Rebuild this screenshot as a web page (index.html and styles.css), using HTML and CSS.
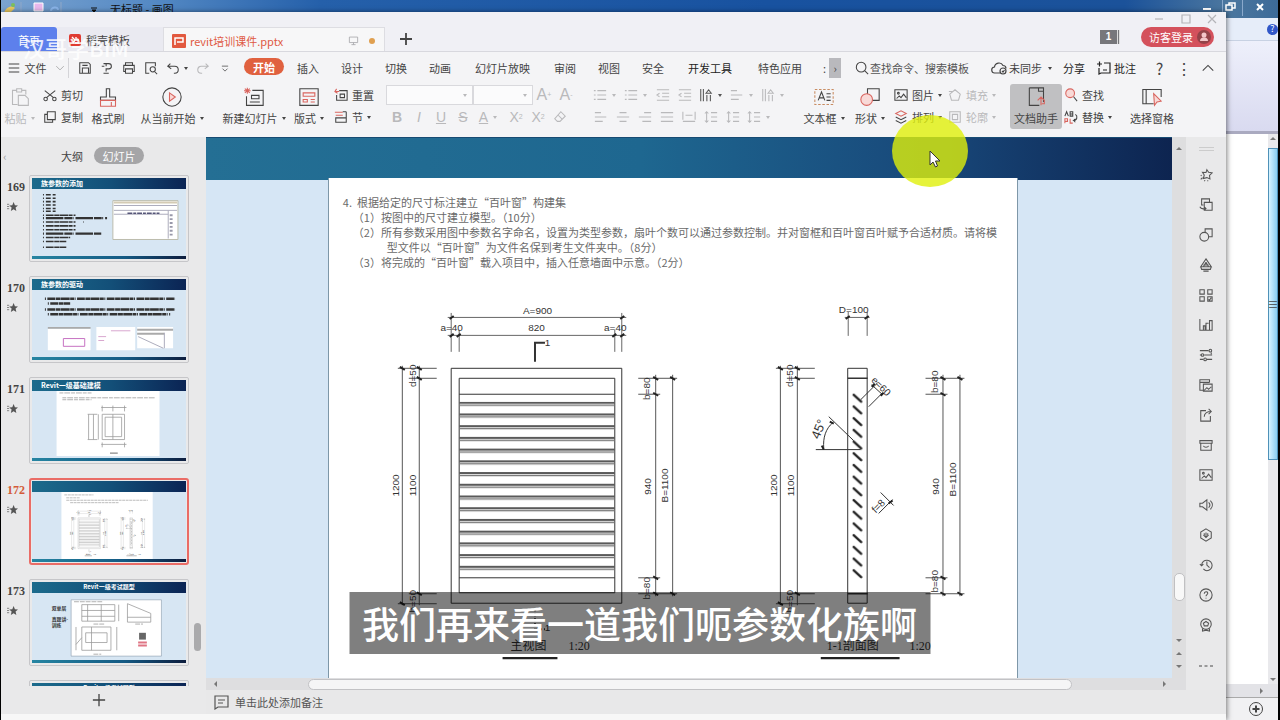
FILE: index.html
```html
<!DOCTYPE html>
<html lang="zh-CN">
<head>
<meta charset="utf-8">
<title>revit培训课件.pptx</title>
<link rel="stylesheet" href="styles.css">
</head>
<body>
<svg class="defs" aria-hidden="true">
  <defs>
    <symbol id="menu" viewBox="0 0 16 16"><path d="M2 3.500h12M2 8h12M2 12.500h12"/></symbol>
    <symbol id="chev" viewBox="0 0 16 16"><path d="M2 5l6 6 6-6"/></symbol>
    <symbol id="up" viewBox="0 0 16 16"><path d="M2 11l6-6 6 6"/></symbol>
    <symbol id="save" viewBox="0 0 16 16"><path d="M2 2h10l2 2v10H2zM5 14V8h7v6M5 5h6"/></symbol>
    <symbol id="pdf" viewBox="0 0 16 16"><path d="M4 3h6a3 3 0 010 6H7v3M2 6h3M7 3v3M4 14h6"/></symbol>
    <symbol id="print" viewBox="0 0 16 16"><path d="M4 5V2h8v3M4 12H2V5h12v7h-2M4 9h8v5H4z"/></symbol>
    <symbol id="preview" viewBox="0 0 16 16"><path d="M6 14H2V2h11v4M12 12l3 3"/><circle cx="10" cy="9.500" r="3"/></symbol>
    <symbol id="undo" viewBox="0 0 16 16"><path d="M5 3L2 6l4 3M2 6h8a4 4 0 010 8H9"/></symbol>
    <symbol id="redo" viewBox="0 0 16 16"><path d="M11 3l3 3-4 3M14 6H6a4 4 0 000 8h1"/></symbol>
    <symbol id="more" viewBox="0 0 16 16"><path d="M3 5h10M4 9l4 4 4-4"/></symbol>
    <symbol id="search" viewBox="0 0 16 16"><circle cx="7" cy="7" r="5.500"/><path d="M11 11l4 4"/></symbol>
    <symbol id="cloud" viewBox="0 0 16 16"><path d="M9 13H4a3 3 0 01-.5-6A4.500 4.500 0 0112 5.500a3 3 0 013 3"/><circle cx="12" cy="11" r="3"/><path d="M11 11l1 1 1.500-2"/></symbol>
    <symbol id="note" viewBox="0 0 16 16"><path d="M8 3h6v10H5l-2 1V8M1 4h5M3.500 1.500v5M7 10h4"/></symbol>
    <symbol id="memo" viewBox="0 0 16 16"><path d="M2 2h13v11H5l-3 2zM5 6h7M5 9h5"/></symbol>
    <symbol id="screen" viewBox="0 0 16 16"><path d="M2 3h12v8H2zM8 11v3M5 14h6"/></symbol>
    <symbol id="paste" viewBox="0 0 24 24"><path d="M8 4H3v17h6M14 4h5v5M8 2h6v4H8zM10 10h8l4 4v8H10z"/></symbol>
    <symbol id="cut" viewBox="0 0 16 16"><path d="M2 3l10 8M14 3L4 11"/><circle cx="3" cy="12.500" r="2"/><circle cx="13" cy="12.500" r="2"/></symbol>
    <symbol id="copy" viewBox="0 0 16 16"><path d="M5 2h9v9H5zM5 5H2v9h9v-3"/></symbol>
    <symbol id="brush" viewBox="0 0 24 24"><path d="M10 12V2h4v10h7v4H3v-4z"/><path class="red" d="M3 16h18v7H3zM16 18v5"/></symbol>
    <symbol id="play" viewBox="0 0 24 24"><circle cx="12" cy="12" r="11"/><path class="red tint" d="M9 7l7 5-7 5z"/></symbol>
    <symbol id="newslide" viewBox="0 0 24 24"><path d="M10 4h13v18H3V11M9 10h9v4H9zM7 18h12"/><path class="red" d="M1 2l6 5M7 2L1 7M4 1v7M0 4.500h8"/></symbol>
    <symbol id="layout" viewBox="0 0 24 24"><path d="M1 2h22v20H1z"/><path class="red" d="M5 7h14v4H5zM5 15h5v3H5zM14 15h5M14 18h5"/></symbol>
    <symbol id="reset" viewBox="0 0 16 16"><path d="M6 3h9v11H3V8M7 7h5v4H7z"/><path class="red" d="M1 4h5M3 1L1 4l3 2"/></symbol>
    <symbol id="section" viewBox="0 0 16 16"><path class="red" d="M1 2.500h9M2 6h8"/><path d="M2 9h12v5H2zM14 2v7M10 2h4"/></symbol>
    <symbol id="eraser" viewBox="0 0 16 16"><path d="M9 2l5 5-6 6H5l-3-3zM6 6l5 5"/></symbol>
    <symbol id="bullets" viewBox="0 0 16 16"><path d="M1 3h2M5 3h10M1 8h2M5 8h10M1 13h2M5 13h10"/></symbol>
    <symbol id="indent" viewBox="0 0 16 16"><path d="M1 2h14M7 6h8M7 10h8M1 14h14M4 6L1 8l3 2"/></symbol>
    <symbol id="vert" viewBox="0 0 16 16"><path d="M2 1v14M5 1v14M8 6l3-4 3 4zM9 8v7M13 8v7"/></symbol>
    <symbol id="al" viewBox="0 0 16 16"><path d="M1 3h7M1 8h13M1 13h9"/></symbol>
    <symbol id="ac" viewBox="0 0 16 16"><path d="M4 3h8M1 8h14M4 13h8"/></symbol>
    <symbol id="ar" viewBox="0 0 16 16"><path d="M7 3h8M1 8h14M5 13h10"/></symbol>
    <symbol id="aj" viewBox="0 0 16 16"><path d="M1 3h14M1 8h14M1 13h14"/></symbol>
    <symbol id="dist" viewBox="0 0 16 16"><path d="M1 2v9M15 2v9M4 6h8M1 13h14"/></symbol>
    <symbol id="spacing" viewBox="0 0 16 16"><path d="M3 2v12M1 4l2-2 2 2M1 12l2 2 2-2M8 3h7M8 8h7M8 13h7"/></symbol>
    <symbol id="textbox" viewBox="0 0 24 24"><path class="amber" stroke-dasharray="3 2" d="M1 3h22v18H1z"/><path d="M5 16l4-10 4 10M6.500 13h5M15 8h5M15 12h5M15 16h5"/></symbol>
    <symbol id="shapes" viewBox="0 0 24 24"><path d="M9 2h14v14H9z"/><circle class="red tint" cx="8" cy="15" r="7"/></symbol>
    <symbol id="image" viewBox="0 0 16 16"><path d="M1 2h14v12H1zM3 12l3-3 2 2 3-4 3 4"/><circle cx="5" cy="6" r="1"/></symbol>
    <symbol id="layers" viewBox="0 0 16 16"><path class="red" d="M2 4l6-3 6 3-6 3z"/><path d="M2 8l6 3 6-3M2 12l6 3 6-3"/></symbol>
    <symbol id="fill" viewBox="0 0 16 16"><path d="M8 2l6 5-2 7H4L2 7zM1 4h4"/></symbol>
    <symbol id="outline" viewBox="0 0 16 16"><path d="M2 2h12v12H2zM5 5h6v6H5z"/></symbol>
    <symbol id="doc" viewBox="0 0 24 24"><path d="M4 1h17v17M4 1v21h12M15 1v4h6"/><path class="red" d="M18 12v10M14 16l4-4 4 4v4h-3"/></symbol>
    <symbol id="find" viewBox="0 0 16 16"><circle class="red tint" cx="7" cy="6" r="5"/><path d="M11 10l4 5"/></symbol>
    <symbol id="replace" viewBox="0 0 16 16"><path d="M1 7l2-5 2 5M7 2v5h3V2zM7 4.500h3M13 5c3 2 2 7-2 7l2-2M11 12l2 2"/><path class="red" d="M1 15v-5h3v3H1M7 10v5h3"/></symbol>
    <symbol id="select" viewBox="0 0 24 24"><path d="M14 20H1V3h22v9M5 3v17"/><path class="red tint" d="M14 8l9 9-5 1-3 4z"/></symbol>
    <symbol id="star" viewBox="0 0 16 16"><path d="M9 2l2 3 4 .5-3 3 .5 4L9 11l-4 1 1-4-2-3 4 .2zM2 9l1-1M2 13l2-2M6 15l1-1M10 15v-1"/></symbol>
    <symbol id="swap" viewBox="0 0 16 16"><path d="M12 5V1H3v7h2M6 5h9v9H6zM1 10c1 3 3 3 7 2M6 10l2 2-2 2"/></symbol>
    <symbol id="shape2" viewBox="0 0 16 16"><path d="M7 5V1h8v9h-4"/><circle cx="6" cy="10" r="5"/></symbol>
    <symbol id="mount" viewBox="0 0 16 16"><path d="M8 1l6 9H2zM8 5l3 5M8 5l-3 5M5 8h6M2 10l1 3h10l1-3M5 15h6"/></symbol>
    <symbol id="apps" viewBox="0 0 16 16"><path d="M1 2h5v5H1zM10 2h5v5h-5zM1 10h5v5H1zM10 10h5v5h-5zM11 13l1 1 2-3"/></symbol>
    <symbol id="chart" viewBox="0 0 16 16"><path d="M1 1v13h14V3h-3v11M5 14V9h2v5M8 14V6h3"/></symbol>
    <symbol id="sliders" viewBox="0 0 16 16"><path d="M1 3h10M1 8h2M6 8h9M1 13h4M9 13h6M14 5v2"/><circle cx="13" cy="3" r="1.500"/><circle cx="4" cy="8" r="1.500"/><circle cx="7" cy="13" r="1.500"/></symbol>
    <symbol id="album" viewBox="0 0 16 16"><path d="M5 14H1V2h11v3M1 5h11M5 7h10v8H5zM6 14l3-3 2 2 3-3"/></symbol>
    <symbol id="share" viewBox="0 0 16 16"><path d="M8 3H2v12h11V9M6 10c0-4 3-6 8-6M11 1l3 3-3 3"/></symbol>
    <symbol id="box" viewBox="0 0 16 16"><path d="M1 3h14v3H1zM2 6v8h12V6M5 9c1 2 5 2 6 0"/></symbol>
    <symbol id="sound" viewBox="0 0 16 16"><path d="M1 6h3l5-4v12l-5-4H1zM11 5c2 2 2 4 0 6M13 3c3 3 3 7 0 10"/></symbol>
    <symbol id="hex" viewBox="0 0 16 16"><path d="M8 1l6 3.500v7L8 15l-6-3.500v-7zM8 5v6M5 8l3 3 3-3M6 6v3M10 6v3"/></symbol>
    <symbol id="history" viewBox="0 0 16 16"><path d="M3 8a6 6 0 116 6.500c-2 0-3-1-4-2M1 7l2 2 2-2M9 4v4l3 3"/></symbol>
    <symbol id="help" viewBox="0 0 16 16"><circle cx="8" cy="8" r="7"/><path d="M6 6.500c0-3 4-3 4-.5 0 1.500-2 1.500-2 3.500M8 11v1"/></symbol>
    <symbol id="badge" viewBox="0 0 16 16"><circle cx="8" cy="7" r="6"/><path d="M8 4l3 2-1 3H6L5 6zM4 12v3l4-1 4 1v-3"/></symbol>
    <symbol id="fav" viewBox="0 0 10 10"><path d="M0 3h2M0 5h2M0 7h2" stroke="#777" stroke-width=".8"/><path d="M6 1l1.200 2.800L10 4 7.800 6l.7 3L6 7.500 3.500 9l.7-3L2 4l2.800-.2z" fill="#555" stroke="none"/></symbol>

    <pattern id="louver" x="458" y="402" width="156" height="11.750" patternUnits="userSpaceOnUse"><path d="M0 1h156" stroke="#222" stroke-width="1.400"/><path d="M0 3.400h156" stroke="#777" stroke-width="1.400"/></pattern>
    <pattern id="blade" x="852" y="393" width="12" height="11.730" patternUnits="userSpaceOnUse"><path d="M2 2l7.500 7" stroke="#222" stroke-width="2.400" stroke-linecap="round"/></pattern>

    <g id="drawing">
      <g fill="none" stroke="#333" stroke-width="1">
        <path d="M450.500 368.500h171V604H450.500zM458.500 378.500h156v215h-156zM458.500 394.500h156M458.500 578.500h156"/>
        <path stroke="#666" d="M447 317.500h179M447 335.500h179M450.500 313v39M458.500 330v22M614.500 330v22M621.500 313v39"/>
        <path stroke="#555" d="M401.500 366v240M418.500 366v240M397 368.500h39M408 378.500h28M408 594.500h28M397 604.500h39"/>
        <path stroke="#555" d="M655.500 375v222M672.500 375v222M638 378.500h39M638 394.500h22M638 578.500h22M638 594.500h39"/>
        <path stroke-width="2" d="M534.500 362v-19h10"/><path stroke-width="2" stroke-dasharray="3 2" d="M534.500 609v21h10"/>
        <path d="M848 368.500h19.500V604H848z"/><path stroke-width="1.600" d="M848 378.500h20M848 594.500h20"/>
        <path stroke="#666" d="M845 317.500h25M848.500 312v24M867.500 312v24"/>
        <path stroke="#555" d="M780.500 366v240M797.500 366v240M776 368.500h39M787 378.500h28M787 594.500h28M776 604.500h39"/>
        <path stroke="#555" d="M943.500 375v222M960.500 375v222M926 378.500h39M926 394.500h22M926 578.500h22M926 594.500h39"/>
        <path d="M816 450h45M829 417l25 24M824 449c-1-11 2-20 9-26M861 400l17-17M869 407l14-14M872 385l11 10M879 514l14-14M881 493l13 13"/>
      </g>
      <g fill="none" stroke="#222" stroke-width="2">
        <path d="M449 319l4-3M620 319l4-3M449 337l4-3M456 337l4-3M612 337l4-3M620 337l4-3M846 319l4-3M865 319l4-3M399 367l5 3M416 367l5 3M416 377l5 3M416 593l5 3M399 603l5 3M653 377l5 3M670 377l5 3M653 393l5 3M653 577l5 3M653 593l5 3M670 593l5 3M778 367l5 3M795 367l5 3M795 377l5 3M795 593l5 3M778 603l5 3M941 377l5 3M958 377l5 3M941 393l5 3M941 577l5 3M941 593l5 3M958 593l5 3M872 387l3-3M881 396l3-3M889 504l4-3M830 422l4 2M822 446l2 4"/>
      </g>
      <path fill="url(#louver)" stroke="none" d="M459 402h155v175H459z"/>
      <path fill="url(#blade)" stroke="none" d="M852 393h12v187h-12z"/>
      <path stroke="#222" stroke-width="2.400" d="M502 659h55M821 659h79"/>
      <g class="dim">
        <text x="537" y="314">A=900</text><text x="536" y="331">820</text><text x="451" y="331">a=40</text><text x="615" y="331">a=40</text><text x="547" y="346">1</text><text x="547" y="632">1</text>
        <text x="854" y="313">D=100</text>
        <text transform="translate(398 486)rotate(-90)">1200</text><text transform="translate(415 486)rotate(-90)">1100</text><text transform="translate(415 376)rotate(-90)">d=50</text><text transform="translate(415 602)rotate(-90)">b=50</text>
        <text transform="translate(650 389)rotate(-90)">b=80</text><text transform="translate(651 487)rotate(-90)">940</text><text transform="translate(668 486)rotate(-90)">B=1100</text><text transform="translate(650 589)rotate(-90)">b=80</text>
        <text transform="translate(777 486)rotate(-90)">1200</text><text transform="translate(794 486)rotate(-90)">1100</text><text transform="translate(793 376)rotate(-90)">d=50</text><text transform="translate(793 602)rotate(-90)">b=50</text>
        <text transform="translate(939 382)rotate(-90)">b=80</text><text transform="translate(940 487)rotate(-90)">940</text><text transform="translate(957 480)rotate(-90)">B=1100</text><text transform="translate(939 582)rotate(-90)">b=80</text>
        <text transform="translate(879 389)rotate(45)">e=60</text><text transform="translate(881 509)rotate(-45)">f=8</text>
        <text class="angle" transform="translate(823 431)rotate(-68)">45°</text>
      </g>
      <g class="cap"><text x="510" y="651">主视图</text><text x="568" y="651">1:20</text><text x="827" y="651">1-1剖面图</text><text x="910" y="651">1:20</text></g>
    </g>
  </defs>
</svg>

<main class="desktop">
  <section class="paint" aria-label="画图">
    <header class="paint-title">
      <svg class="paint-icons" viewBox="0 0 100 18"><path d="M3 13c2-7 9-8 11-5l-4 4z" fill="#e8c860" stroke="none"/><circle cx="12" cy="5" r="2" fill="#7bbf5a" stroke="none"/><path d="M20 2v12M60 2v12" stroke="#90a8c8"/><path d="M33 3h9v8h-9z" fill="#e9b8ec" stroke="#fff"/><path d="M50 11c0-4 7-5 7-1" stroke="#8ab4e8" stroke-width="2"/><path d="M90 8h6M91 10l2 2 2-2z" stroke="#111" fill="#111"/></svg>
      <span>无标题 - 画图</span>
      <svg class="paint-controls" viewBox="0 0 80 18"><path d="M24.500 0v16M44.500 0v16" stroke="#8aa9cc"/><path d="M5 9h8" stroke="#fff" stroke-width="2"/><path d="M28 5h6v5h-6zM31 5V3h6v5h-3" stroke="#fff" stroke-width="1.500"/><path d="M59 4l6 6M65 4l-6 6" stroke="#fff" stroke-width="2"/></svg>
    </header>
    <div class="paint-tabs"><button class="paint-help" aria-label="帮助">?</button></div>
    <div class="paint-ribbon"></div>
    <div class="paint-canvas"><div class="paint-scroll"><i class="tri-up"></i><div class="paint-thumb">≡</div><i class="tri-down"></i></div></div>
    <div class="paint-hscroll"><i class="tri-right"></i></div>
    <footer class="paint-status"><svg viewBox="0 0 16 16" class="zoom"><circle cx="8" cy="8" r="6.500"/><path d="M4.500 8h7M8 4.500v7" stroke-width="2"/></svg></footer>
  </section>

  <section class="app" aria-label="演示">
    <header class="tabs">
      <button class="tab home">首页</button>
      <button class="tab store"><svg class="logo" viewBox="0 0 12 12"><rect width="12" height="12" rx="2" fill="#df3b32"/><path d="M3 3l3 3-2 3M7 3v3h3M6 9h4" stroke="#fff" stroke-width="1.400"/></svg>稻壳模板</button>
      <button class="tab file"><svg class="logo big" viewBox="0 0 14 14"><rect width="14" height="14" rx="1" fill="#e2593f"/><path d="M3 11V4h8v4H5" stroke="#fff" stroke-width="1.500"/></svg><span>revit培训课件.pptx</span><svg class="ico pale"><use href="#screen"/></svg><i class="dot"></i></button>
      <button class="add" aria-label="新建标签"><svg class="ico"><path d="M7 1v12M1 7h12" stroke-width="1.800"/></svg></button>
      <div class="tab-right">
        <div class="win"><button aria-label="最小化"><svg class="ico small"><path d="M1 5h8"/></svg></button><button aria-label="最大化"><svg class="ico small"><path d="M1 1h8v8H1z"/></svg></button><button aria-label="关闭"><svg class="ico small"><path d="M1 1l8 8M9 1L1 9"/></svg></button></div>
        <div class="account"><span class="count">1</span><button class="login">访客登录<svg viewBox="0 0 14 14"><circle cx="7" cy="7" r="7" fill="#944349"/><circle cx="7" cy="5" r="2.500" fill="#f3c6c9"/><path d="M3 11c0-5 8-5 8 0z" fill="#f3c6c9"/></svg></button></div>
      </div>
    </header>

    <nav class="menu">
      <button class="filebtn"><svg class="ico"><use href="#menu"/></svg>文件<svg class="ico small"><use href="#chev"/></svg></button>
      <div class="quick"><button aria-label="保存"><svg class="ico"><use href="#save"/></svg></button><button aria-label="输出PDF"><svg class="ico"><use href="#pdf"/></svg></button><button aria-label="打印"><svg class="ico"><use href="#print"/></svg></button><button aria-label="预览"><svg class="ico"><use href="#preview"/></svg></button><button class="drop" aria-label="撤销"><svg class="ico"><use href="#undo"/></svg></button><button class="off" aria-label="恢复"><svg class="ico"><use href="#redo"/></svg></button><button aria-label="更多"><svg class="ico small"><use href="#more"/></svg></button></div>
      <div class="pages"><button class="on">开始</button><button>插入</button><button>设计</button><button>切换</button><button>动画</button><button class="wide">幻灯片放映</button><button>审阅</button><button>视图</button><button>安全</button><button class="wide strong">开发工具</button><button class="wide">特色应用</button></div>
      <div class="overflow"><span>:</span><button aria-label="更多选项卡">›</button></div>
      <label class="search"><svg class="ico"><use href="#search"/></svg><input type="text" placeholder="查找命令、搜索模板" aria-label="查找命令"></label>
      <div class="actions"><button class="drop"><svg class="ico big"><use href="#cloud"/></svg>未同步</button><button class="strong">分享</button><button class="strong"><svg class="ico big"><use href="#note"/></svg>批注</button><div class="more"><button>?</button><button>⋮</button><button aria-label="收起"><svg class="ico"><use href="#up"/></svg></button></div></div>
    </nav>

    <div class="ribbon">
      <button class="large off drop"><svg><use href="#paste"/></svg><span>粘贴</span></button>
      <div class="pair"><button><svg class="ico"><use href="#cut"/></svg>剪切</button><button><svg class="ico"><use href="#copy"/></svg>复制</button></div>
      <button class="large"><svg><use href="#brush"/></svg><span>格式刷</span></button>
      <button class="large drop"><svg><use href="#play"/></svg><span>从当前开始</span></button>
      <button class="large drop"><svg><use href="#newslide"/></svg><span>新建幻灯片</span></button>
      <button class="large drop"><svg><use href="#layout"/></svg><span>版式</span></button>
      <div class="pair reset"><button><svg class="ico"><use href="#reset"/></svg>重置</button><button class="drop"><svg class="ico"><use href="#section"/></svg>节</button></div>
      <div class="tools off">
        <div class="line"><label class="combo drop family"><select aria-label="字体"></select></label><label class="combo drop size"><select aria-label="字号"></select></label><button class="glyph">A<sup>+</sup></button><button class="glyph">A<sup>-</sup></button></div>
        <div class="line"><button><b>B</b></button><button><em>I</em></button><button><u>U</u></button><button><s>S</s></button><button class="drop mid"><u>A</u></button><button>X<sup>2</sup></button><button>X<sub>2</sub></button><button aria-label="清除格式"><svg class="ico"><use href="#eraser"/></svg></button></div>
      </div>
      <div class="tools para off">
        <div class="line"><button class="drop mid" aria-label="项目符号"><svg class="ico"><use href="#bullets"/></svg></button><button class="drop mid" aria-label="编号"><svg class="ico"><use href="#bullets"/></svg></button><button aria-label="减少缩进"><svg class="ico"><use href="#indent"/></svg></button><button aria-label="增加缩进"><svg class="ico"><use href="#indent"/></svg></button><button class="drop mid live" aria-label="文字方向"><svg class="ico"><use href="#vert"/></svg></button><button class="drop mid" aria-label="分栏"><svg class="ico"><use href="#al"/></svg></button><button class="drop mid" aria-label="对齐文本"><svg class="ico"><use href="#vert"/></svg></button></div>
        <div class="line"><button aria-label="左对齐"><svg class="ico"><use href="#al"/></svg></button><button aria-label="居中"><svg class="ico"><use href="#ac"/></svg></button><button aria-label="右对齐"><svg class="ico"><use href="#ar"/></svg></button><button aria-label="两端对齐"><svg class="ico"><use href="#aj"/></svg></button><button aria-label="分散对齐"><svg class="ico"><use href="#dist"/></svg></button><button aria-label="段前"><svg class="ico"><use href="#spacing"/></svg></button><button aria-label="段后"><svg class="ico"><use href="#spacing"/></svg></button><button class="drop mid" aria-label="行距"><svg class="ico"><use href="#spacing"/></svg></button></div>
      </div>
      <button class="large drop"><svg><use href="#textbox"/></svg><span>文本框</span></button>
      <button class="large drop"><svg><use href="#shapes"/></svg><span>形状</span></button>
      <div class="pair snug"><button class="drop"><svg class="ico"><use href="#image"/></svg>图片</button><button class="drop"><svg class="ico"><use href="#layers"/></svg>排列</button></div>
      <div class="pair snug off"><button class="drop"><svg class="ico"><use href="#fill"/></svg>填充</button><button class="drop"><svg class="ico"><use href="#outline"/></svg>轮廓</button></div>
      <button class="large pressed"><svg><use href="#doc"/></svg><span>文档助手</span></button>
      <div class="pair snug"><button><svg class="ico"><use href="#find"/></svg>查找</button><button class="drop"><svg class="ico"><use href="#replace"/></svg>替换</button></div>
      <button class="large"><svg><use href="#select"/></svg><span>选择窗格</span></button>
    </div>

    <div class="work">
      <aside class="outline">
        <div class="modes"><button class="fold" aria-label="折叠">‹</button><button>大纲</button><button class="on">幻灯片</button></div>
        <ol class="thumbs">
          <li><div class="no">169<svg><use href="#fav"/></svg></div><div class="thumb"><h3>族参数的添加</h3>
            <svg class="art" viewBox="0 0 156 69"><g stroke="#333" stroke-width="1.600"><path stroke-dasharray="1 2 5 2 3 200" d="M10 6h30M10 9.500h30M10 13h30M10 16.500h30M10 20h30M10 23h30"/><path stroke-dasharray="1 2 8 .6 5 .4 9 .5 4" d="M10 27h36M10 34h44M10 38h40M10 42h38M10 50h28M10 54h24M10 60h24"/><path stroke-dasharray="1 2 18 1 8 .5" stroke-width="2.200" d="M10 30h66M10 46h60"/></g><path d="M82 12h67v40H82z" fill="#fff" stroke="#bba"/><path d="M83 14h65" stroke="#d4cbb4" stroke-width="2"/><path d="M83 17h65M83 22h65M83 26h56M139 22v29" stroke="#aab"/><path d="M97 25h33" stroke="#557" stroke-width="1.500" stroke-dasharray="5 1 3 1"/><path d="M142 26v24" stroke="#99a" stroke-width="3" stroke-dasharray="2 2"/></svg></div></li>
          <li><div class="no">170<svg><use href="#fav"/></svg></div><div class="thumb"><h3>族参数的驱动</h3>
            <svg class="art" viewBox="0 0 156 69"><g stroke="#333" stroke-width="2.600"><path stroke-dasharray="1 1.500 8 .6 5 .4 9 .5 4 .6" d="M12 9h134M15 14h23M12 20h134M15 25h126"/></g><path d="M15 40h44v22H15zM65 38h40v24H65zM107 38h37v22h-37z" fill="#fff" stroke="none"/><path d="M15 39h44M107 41h37M107 45h28" stroke="#aaa" stroke-width="2"/><path d="M31 50h22v8H31z" stroke="#c46dc0"/><path d="M67 48h8M80 42h20M67 52h6" stroke="#d7a4cd"/><path d="M108 48l26 12M135 44v16" stroke="#aab"/></svg></div></li>
          <li><div class="no">171<svg><use href="#fav"/></svg></div><div class="thumb"><h3>Revit一级基础建模</h3>
            <svg class="art" viewBox="0 0 156 69"><path fill="#fff" stroke="none" d="M24 0h106v67H24z"/><g stroke="#999" stroke-width=".8"><path d="M27 2h33M30 7h95M30 9h30" stroke-dasharray="4 1 6 1"/><path d="M71 24h23v26H71zM74 27h17v20H74zM82 24v26M57 24v26M62 24v26M67 24v26M70 17h26M70 55h26M71 15v6M82 15v6M94 15v6M56 24h10M56 50h10M71 53v5M94 53v5"/><path d="M79 64h8" stroke-width="1.500"/></g></svg></div></li>
          <li class="current"><div class="no">172<svg><use href="#fav"/></svg></div><div class="thumb"><h3></h3>
            <svg class="art" viewBox="0 0 156 69"><path fill="#fff" stroke="none" d="M29 0h94v69H29z"/><path d="M32 3h30M34 6h14M34 8.500h84M38 11h50" stroke="#aaa" stroke-width=".8" stroke-dasharray="3 .6"/><svg x="29" y="1" width="94" height="67" viewBox="328 178 690 498"><use href="#drawing"/></svg></svg></div></li>
          <li><div class="no">173<svg><use href="#fav"/></svg></div><div class="thumb"><h3 class="mid">Revit一级考试题型</h3>
            <svg class="art" viewBox="0 0 156 69"><path fill="#fff" stroke="#89a" stroke-width=".6" d="M39 7h93v58H39z"/><text x="19" y="18">双单层</text><text x="19" y="29">真题讲-</text><text x="19" y="35">训练</text><g stroke="#999" stroke-width=".8"><path d="M50 12h34v17H50zM50 18h34M50 24h34M56 12v17M70 12v17M50 35h30v24H50zM54 41h22v10H54zM44 35v24M86 35v24M88 12v17M97 11l24 10v9H97zM97 25h24M60 35v24M44 53l6-7"/><path stroke-dasharray="5 1" d="M42 9h30M62 32h12M62 63h8M105 32h8"/></g><path d="M109 41h7v7h-7z" fill="#666" stroke="none"/><path d="M108 51h9M108 54h9" stroke="#df7584" stroke-width="2"/></svg></div></li>
          <li><div class="no"></div><div class="thumb"><h3 class="mid">Revit一级考试题型</h3></div></li>
        </ol>
        <i class="side-scroll"></i>
        <button class="new" aria-label="新建幻灯片"><svg viewBox="0 0 16 16"><path d="M8 1v14M1 8h14"/></svg></button>
      </aside>

      <div class="editor">
        <div class="stage">
          <div class="slide">
            <div class="banner"></div>
            <article class="page">
              <div class="question">
                <p class="q1">4.&nbsp; 根据给定的尺寸标注建立“百叶窗”构建集</p>
                <p class="item">（1）按图中的尺寸建立模型。（10分）</p>
                <p class="item">（2）所有参数采用图中参数名字命名，设置为类型参数，扇叶个数可以通过参数控制。并对窗框和百叶窗百叶赋予合适材质。请将模</p>
                <p class="item cont">型文件以“百叶窗”为文件名保到考生文件夹中。（8分）</p>
                <p class="item">（3）将完成的“百叶窗”载入项目中，插入任意墙面中示意。（2分）</p>
              </div>
              <svg class="plan" viewBox="328 290 690 386"><use href="#drawing"/></svg>
            </article>
          </div>
          <div class="vscroll"><i class="tri-up"></i><i class="vthumb"></i><i class="tri-down"></i><i class="tri-up"></i><i class="tri-down"></i></div>
        </div>
        <div class="hscroll"><i class="tri-left"></i><i class="hthumb"></i><i class="tri-right"></i></div>
      </div>

      <aside class="rail">
        <i class="grip"></i>
        <button aria-label="智能美化"><svg class="ico"><use href="#star"/></svg></button><button aria-label="切换"><svg class="ico"><use href="#swap"/></svg></button><button aria-label="形状"><svg class="ico"><use href="#shape2"/></svg></button><button aria-label="图标"><svg class="ico"><use href="#mount"/></svg></button><button aria-label="应用"><svg class="ico"><use href="#apps"/></svg></button><button aria-label="图表"><svg class="ico"><use href="#chart"/></svg></button><button aria-label="属性"><svg class="ico"><use href="#sliders"/></svg></button><button aria-label="相册"><svg class="ico"><use href="#album"/></svg></button><button aria-label="分享"><svg class="ico"><use href="#share"/></svg></button><button aria-label="素材"><svg class="ico"><use href="#box"/></svg></button><button aria-label="图片"><svg class="ico"><use href="#image"/></svg></button><button aria-label="声音"><svg class="ico"><use href="#sound"/></svg></button><button aria-label="插件"><svg class="ico"><use href="#hex"/></svg></button><button aria-label="历史"><svg class="ico"><use href="#history"/></svg></button><button aria-label="帮助"><svg class="ico"><use href="#help"/></svg></button><button aria-label="推荐"><svg class="ico"><use href="#badge"/></svg></button>
        <button class="dots" aria-label="更多"><svg class="ico"><path d="M0 7h3M5.500 7h3M11 7h3" stroke-width="2"/></svg></button>
      </aside>
      <div class="notes"><svg class="ico big"><use href="#memo"/></svg><span>单击此处添加备注</span></div>
    </div>
    <footer class="status"></footer>
  </section>

  <div class="watermark">汉哥学BIM</div>
  <div class="halo"></div>
  <svg class="cursor" viewBox="0 0 12 18"><path d="M1 1v14l3-3 2.500 5 2-1L6.500 11H11z" fill="#fff" stroke="#333"/></svg>
  <div class="subtitle">我们再来看一道我们呃参数化族啊</div>
</main>
</body>
</html>
```

FILE: styles.css
```css
* { box-sizing: border-box; }
body { margin: 0; font: 11px/16px "Noto Sans CJK SC", sans-serif; color: #444; background: #000; }
button, input, select { font: inherit; color: inherit; border: 0; padding: 0; background: none; white-space: nowrap; }
button { display: flex; align-items: center; justify-content: center; }
i { display: block; font-style: normal; }
svg { display: block; flex: none; fill: none; stroke: currentColor; stroke-width: 1; }
.defs { position: absolute; width: 0; height: 0; }
.desktop { position: relative; height: 100vh; min-height: 720px; overflow: hidden; border-left: 1px solid #000; border-right: 2px solid #000; }
.ico { width: 14px; height: 14px; stroke-width: 1.2; }
.ico.small { width: 10px; height: 10px; }
.ico.big { width: 16px; height: 16px; }
.red { stroke: #d9655f; }
.tint { fill: #f8d9d7; }
.amber { stroke: #c88c62; }
.off { color: #b9b9bb; }
.strong { color: #222; }
.drop::after { content: ""; margin-left: 4px; border: 2px solid transparent; border-top: 3px solid currentColor; border-bottom: 0; flex: none; }

.tri-up, .tri-down, .tri-left, .tri-right { width: 0; height: 0; border: 3px solid transparent; }
.tri-up { border-bottom-color: #777; border-top: 0; }
.tri-down { border-top-color: #777; border-bottom: 0; }
.tri-left { border-right-color: #777; border-left: 0; }
.tri-right { border-left-color: #777; border-right: 0; }

/* background window */
.paint { display: flex; flex-direction: column; height: 100%; }
.paint-title { display: flex; align-items: center; height: 18px; background: linear-gradient(90deg, #7ba3cf, #5489c4 12%, #2560aa 25%, #1852a0 60%, #1b529a 88%, #4c779f 96%, #3c6a98); color: #111; }
.paint-icons { width: 100px; height: 18px; margin-right: 9px; }
.paint-controls { width: 80px; height: 18px; margin-left: auto; }
.paint-tabs { display: flex; justify-content: flex-end; align-items: center; height: 23px; background: #e6edf9; border-bottom: 1px solid #c8d2e3; }
.paint-help { width: 11px; height: 11px; border-radius: 6px; background: #3157c8; color: #fff; font-size: 9px; }
.paint-ribbon { height: 93px; background: linear-gradient(#eef0fb, #d9daf0); border-bottom: 3px solid #aaaac0; }
.paint-canvas { flex: 1; display: flex; justify-content: flex-end; background: #fff; }
.paint-scroll { width: 10px; display: flex; flex-direction: column; align-items: center; justify-content: space-between; padding: 3px 0; background: #e9e9ec; }
.paint-thumb { width: 10px; height: 312px; margin: 8px 0 auto; display: flex; align-items: center; justify-content: center; background: linear-gradient(90deg, #d7f3ff, #8acdf0); border: 1px solid #4f91b8; }
.paint-hscroll { height: 14px; display: flex; align-items: center; justify-content: flex-end; padding-right: 15px; background: #e3e3e7; border-bottom: 1px solid #aaa; }
.paint-status { height: 22px; display: flex; align-items: center; justify-content: flex-end; padding-right: 14px; background: #f1f1f3; }
.zoom { width: 16px; height: 16px; }

/* presentation window */
.app { position: absolute; inset: 12px 52px 0 0; display: flex; flex-direction: column; background: #f4f4f6; box-shadow: 1px 0 5px rgba(0,0,0,.5); }
.tabs { display: flex; align-items: flex-end; height: 40px; background: #f0f0f5; border-bottom: 1px solid #d8d8de; }
.tab { height: 24px; padding-top: 2px; }
.home { width: 56px; background: #5d80ec; color: #fff; border-radius: 3px 3px 0 0; }
.store { width: 106px; gap: 5px; justify-content: flex-start; padding-left: 12px; background: #eaeaf1; }
.logo { width: 12px; height: 12px; stroke: none; }
.logo.big { width: 14px; height: 14px; }
.file { width: 222px; gap: 4px; padding: 2px 9px 0 8px; background: #f7f7f8; color: #df5a44; border: 1px solid #dddde2; border-bottom: 0; }
.file span { flex: 1; text-align: left; }
.pale { color: #a6a6aa; width: 11px; height: 11px; }
.dot { width: 6px; height: 6px; margin-left: 6px; border-radius: 3px; background: #e0a050; }
.add { width: 42px; height: 24px; }
.add .ico { width: 14px; }
.tab-right { margin-left: auto; height: 40px; padding-right: 5px; display: flex; flex-direction: column; }
.win { display: flex; justify-content: flex-end; height: 16px; color: #b4b4b8; }
.win button { width: 27px; height: 16px; }
.win button:last-child { width: 18px; margin-left: 4px; }
.account { display: flex; align-items: center; gap: 21px; padding-right: 7px; }
.count { width: 20px; height: 14px; font: bold 10px/14px "Liberation Sans", sans-serif; text-align: center; color: #fff; background: #77777b; border-right: 3px double #ddd; }
.login { height: 20px; padding: 0 3px 0 8px; gap: 4px; border-radius: 10px; background: #d4515c; color: #fff; }
.login svg { width: 14px; height: 14px; stroke: none; }

.menu { display: flex; align-items: center; height: 32px; }
.menu button { height: 20px; }
.filebtn { width: 68px; gap: 4px; padding-left: 2px; border-right: 1px solid #d4d4d8; }
.filebtn .small { margin-left: 4px; color: #999; }
.quick { display: flex; width: 176px; padding-left: 5px; }
.quick button { width: 22px; }
.quick .drop { width: 30px; }
.pages { display: flex; gap: 22px; }
.pages .on { margin: 0 -9px 0 -1px; width: 40px; height: 17px; border-radius: 9px; background: #e0613f; color: #fff; font-weight: bold; }
.pages .wide { padding: 0 2px; }
.overflow { display: flex; align-items: center; gap: 3px; margin-left: 19px; }
.overflow button { width: 12px; background: #b9b9bd; }
.search { flex: 1; display: flex; align-items: center; gap: 1px; padding-left: 14px; }
.search input { flex: 1; width: 60px; min-width: 0; height: 20px; }
.search input::placeholder { color: #555; opacity: 1; }
.actions { display: flex; align-items: center; gap: 11px; padding-right: 12px; }
.actions button { gap: 2px; }
.actions .more { display: flex; gap: 11px; padding-left: 6px; }
.more button { width: 13px; font-size: 16px; }

.ribbon { display: grid; grid-template-columns: 37px 50px 40px 88px 76px 34px 58px 206px 210px 48px 44px 54px 64px 52px 62px 56px; height: 53px; padding-bottom: 8px; }
.large { position: relative; display: grid; grid-template-columns: auto auto; grid-template-rows: 25px 18px; place-content: start center; align-items: center; }
.large svg { grid-column: 1 / -1; justify-self: center; width: 20px; height: 20px; stroke-width: 1.3; }
.large span { line-height: 16px; }
.pressed { background: #c0c0c2; border-radius: 3px; }
.pair { display: grid; grid-template-rows: 22px 22px; padding-left: 5px; }
.pair button { justify-content: flex-start; gap: 4px; }
.pair.reset { padding-left: 8px; }
.pair.snug { padding-left: 2px; }
.pair .drop::after { margin-left: 0; }
.tools { display: grid; grid-template-rows: 22px 22px; padding-left: 2px; font: 14px "Liberation Sans", sans-serif; }
.line { display: flex; align-items: center; }
.line button { width: 22px; height: 22px; }
.line .mid { width: 31px; padding-right: 3px; }
.line .drop::after { margin-left: 5px; }
.combo { display: flex; align-items: center; height: 20px; padding-right: 5px; background: #fbfbfc; border: 1px solid #d9d9dd; }
.combo select { flex: 1; min-width: 0; height: 18px; appearance: none; }
.family { width: 87px; }
.size { width: 60px; }
.glyph { font-size: 16px; }
sup, sub { font-size: 7px; line-height: 0; }
.para { padding-left: 0; }
.live { color: #555; }

.work { flex: 1; display: grid; grid-template-columns: 205px 1fr 40px; grid-template-rows: 1fr 24px; min-height: 0; background: #e8e8ea; }
.outline { position: relative; grid-row: 1 / 3; display: flex; flex-direction: column; min-height: 0; overflow: hidden; background: #e9e9ea; }
.modes { display: flex; align-items: center; height: 37px; flex: none; }
.modes .fold { width: 8px; margin-right: 52px; color: #999; }
.modes .on { width: 50px; height: 17px; margin-left: 11px; border-radius: 9px; background: #a5a5a7; color: #fff; }
.thumbs { list-style: none; flex: 1; min-height: 0; margin: 0; padding: 1px 0 0; overflow: hidden; }
.thumbs li { display: grid; grid-template-columns: 28px 160px; height: 101px; }
.no { padding: 4px 0 0 6px; font: bold 12px/16px "Liberation Serif", serif; }
.no svg { width: 11px; height: 11px; margin-top: 6px; }
.thumb { display: flex; flex-direction: column; height: 87px; padding: 2px; border: 1px solid #c6c6c9; border-radius: 2px; background: #d7e6f3 content-box; }
.thumb h3 { flex: none; height: 11px; margin: 0; padding-left: 9px; font: bold 7px/10px "Noto Sans CJK SC", sans-serif; color: #fff; background: linear-gradient(90deg, #1c6b8c, #135079 50%, #0b2454); }
.thumb h3.mid { padding: 0; text-align: center; font-size: 6px; }
.thumb::after { content: ""; height: 3px; margin-top: auto; background: linear-gradient(90deg, #2685a2, #145a84 60%, #0d1d3e); }
.art { width: 100%; height: 67px; overflow: hidden; }
.art > text { font: bold 5px "Noto Sans CJK SC", sans-serif; fill: #333; stroke: none; }
.current .thumb { border: 2px solid #ea6c66; padding: 1px; border-radius: 3px; }
.current .no { color: #d45b38; }
.side-scroll { position: absolute; right: 5px; bottom: 63px; width: 7px; height: 28px; border-radius: 4px; background: #aaaaac; }
.new { height: 28px; flex: none; padding-right: 9px; }
.new svg { width: 14px; height: 14px; stroke-width: 1.5; }

.editor { display: flex; flex-direction: column; min-width: 0; min-height: 0; }
.stage { flex: 1; display: flex; min-height: 0; }
.slide { flex: 1; display: grid; grid-template-columns: 122fr 691fr 154fr; grid-template-rows: 42px 1fr; min-width: 0; min-height: 0; background: #d6e6f5; border-top: 1px solid #174b73; }
.banner { grid-column: 1 / -1; background: linear-gradient(90deg, #246f94, #1e6790 45%, #18487a 75%, #0d2450); }
.page { grid-column: 2; margin-top: -2px; display: flex; flex-direction: column; min-height: 0; overflow: hidden; background: #fff; border: solid #7e97a8; border-width: 0 1px; }
.question { height: 112px; padding: 17px 0 0 14px; color: #6a6a6a; line-height: 15px; white-space: nowrap; }
.question p { margin: 0; }
.question .item { padding-left: 10px; }
.question .cont { padding-left: 44px; }
.plan { width: 100%; height: auto; }
.dim text { font: 10px "Liberation Sans", sans-serif; text-anchor: middle; fill: #333; stroke: none; }
.dim .angle { font-size: 13px; }
.cap text { font: 12px "Liberation Serif", "Noto Sans CJK SC", serif; fill: #333; stroke: none; }
.vscroll { width: 14px; display: flex; flex-direction: column; align-items: center; gap: 10px; padding: 10px 0; background: #dededf; }
.vthumb { width: 11px; height: 28px; margin: auto 0 28px; border: 1px solid #c0c0c2; border-radius: 5px; background: #f8f8f8; }
.hscroll { height: 12px; display: flex; align-items: center; padding: 0 20px 0 8px; background: #dedee0; }
.hthumb { flex: 1; margin: 0 91px; height: 11px; border: 1px solid #c2c2c5; border-radius: 6px; background: #f5f5f6; }
.rail { display: flex; flex-direction: column; align-items: center; background: #e9e9ea; color: #555; }
.rail button { width: 30px; height: 30px; flex: none; }
.rail .ico { stroke-width: 1.2; }
.grip { width: 15px; height: 4px; margin: 10px 0 9px; flex: none; border: solid #ccc; border-width: 1px 0; }
.rail .dots { margin-top: 8px; height: 36px; color: #999; }
.notes { grid-column: 2 / 4; display: flex; align-items: center; gap: 6px; padding-left: 7px; background: #e8e8e9; color: #555; }
.status { height: 6px; background: #f7f7f7; }

/* overlays */
.watermark { position: absolute; left: 22px; top: 33px; font-size: 22px; font-weight: 500; line-height: 28px; color: rgba(255,255,255,.85); }
.halo { position: absolute; left: 891px; top: 115px; width: 76px; height: 72px; border-radius: 50%; background: rgba(224,240,10,.8); }
.cursor { position: absolute; left: 928px; top: 150px; width: 12px; height: 18px; }
.subtitle { position: absolute; left: 50%; bottom: 66px; transform: translateX(-50%); padding: 0 13px; font-size: 37px; font-weight: 500; line-height: 62px; white-space: nowrap; color: #fff; background: rgba(0,0,0,.5); }
```
